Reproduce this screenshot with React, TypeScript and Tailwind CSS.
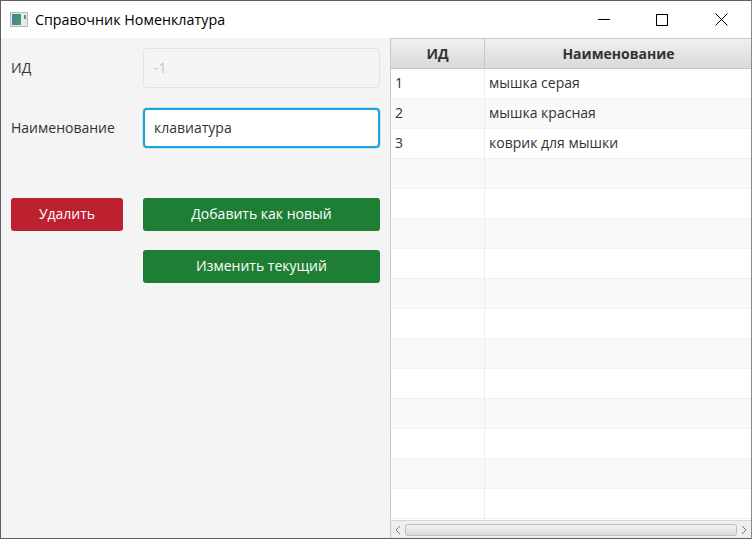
import React from 'react';

const rows = [
  { id: '1', name: 'мышка серая' },
  { id: '2', name: 'мышка красная' },
  { id: '3', name: 'коврик для мышки' },
  ...Array.from({ length: 12 }, () => ({ id: '', name: '' })),
];

const font = { fontFamily: '"Open Sans", "Noto Sans", sans-serif' };

const AppIcon = () => (
  <svg width="18" height="15" viewBox="0 0 18 15" className="shrink-0">
    <defs>
      <linearGradient id="ico" x1="0" y1="0" x2="1" y2="1">
        <stop offset="0" stopColor="#3f7fa0" />
        <stop offset="1" stopColor="#4f9a68" />
      </linearGradient>
    </defs>
    <rect x="0.5" y="0.5" width="17" height="14" fill="#e8eaea" stroke="#b4b8b8" />
    <rect x="2" y="2" width="9" height="11" fill="url(#ico)" />
    <rect x="14" y="3" width="2" height="4" fill="#4f9a8a" />
  </svg>
);

export default function App() {
  return (
    <div
      className="w-[752px] h-[539px] flex flex-col overflow-hidden bg-white border-t border-l border-r border-b border-[#5f5f5f] border-r-[#8a8a8a] text-[#333333] text-[14px]"
      style={font}
    >
      {/* Title bar */}
      <div className="h-[37px] shrink-0 flex items-center bg-white text-[#000000]">
        <div className="ml-[9px] mr-[7px] flex items-center">
          <AppIcon />
        </div>
        <span className="text-[14.3px] flex-1">Справочник Номенклатура</span>
        <div className="flex items-center">
          <button className="w-[59px] h-[37px] flex items-center justify-center">
            <span className="block w-[12px] h-px bg-black" />
          </button>
          <button className="w-[59px] h-[37px] flex items-center justify-center pr-[2px]">
            <span className="block w-[12px] h-[12px] border border-black" />
          </button>
          <button className="w-[59px] h-[37px] flex items-center justify-center">
            <svg width="13" height="13" viewBox="0 0 13 13">
              <path d="M0.5 0.5 L12.5 12.5 M12.5 0.5 L0.5 12.5" stroke="#000" strokeWidth="1" fill="none" />
            </svg>
          </button>
        </div>
      </div>

      <div className="flex-1 flex min-h-0 bg-[#f4f4f4]">
        {/* Form */}
        <div className="w-[389px] shrink-0 pl-[10px] pr-[10px] pt-[10px]">
          <div className="flex items-center h-[40px]">
            <label className="w-[132px] text-[#333333] pb-[2px]">ИД</label>
            <input
              disabled
              value="-1"
              readOnly
              className="w-[237px] h-[40px] px-[10px] pb-[2px] rounded-[4px] border border-[#e3e3e3] bg-[#f5f5f5] text-[#c4c4c4] text-[14px] outline-none"
            />
          </div>
          <div className="flex items-center h-[40px] mt-[20px]">
            <label className="w-[132px] text-[#333333] pb-[2px]">Наименование</label>
            <input
              value="клавиатура"
              readOnly
              className="w-[237px] h-[40px] px-[9px] pb-[2px] rounded-[4px] border-2 border-[#1aa3da] shadow-[0_0_0_1px_#c4e6f4] bg-white text-[#333333] text-[14px] outline-none"
            />
          </div>
          <div className="flex mt-[50px]">
            <button className="w-[112px] h-[33px] pb-[2px] mr-[20px] rounded-[3px] bg-[#bd2130] text-white text-[14px]">Удалить</button>
            <button className="w-[237px] h-[33px] pb-[2px] rounded-[3px] bg-[#1e7e34] text-white text-[14px]">Добавить как новый</button>
          </div>
          <div className="flex justify-end mt-[19px]">
            <button className="w-[237px] h-[33px] pb-[2px] rounded-[3px] bg-[#1e7e34] text-white text-[14px]">Изменить текущий</button>
          </div>
        </div>

        {/* Table */}
        <div className="flex-1 min-w-0 flex flex-col border-l border-[#c8c8c8] bg-white">
          <div className="h-[31px] shrink-0 flex font-bold text-[#333333] bg-gradient-to-b from-[#f0f0f0] to-[#d9d9d9] border-t border-b border-[#c8c8c8]">
            <div className="w-[94px] shrink-0 flex items-center justify-center border-r border-[#c8c8c8]">ИД</div>
            <div className="flex-1 flex items-center justify-center pl-[1px]">Наименование</div>
          </div>
          <div className="flex-1 min-h-0 overflow-hidden">
            {rows.map((row, i) => (
              <div
                key={i}
                className={`h-[30px] flex items-center border-b border-[#f0f0f0] ${i % 2 === 1 ? 'bg-[#f9f9f9]' : 'bg-white'}`}
              >
                <div className="w-[94px] h-full shrink-0 flex items-center pl-[4px] pb-[2px] border-r border-[#ececec]">{row.id}</div>
                <div className="flex-1 pl-[4px] pb-[2px]">{row.name}</div>
              </div>
            ))}
          </div>
          {/* Scrollbar */}
          <div className="h-[18px] shrink-0 flex items-center bg-[#efefef] border-t border-[#d6d6d6]">
            <svg width="14" height="16" viewBox="0 0 14 16" className="shrink-0">
              <path d="M9 4 L5 8 L9 12" stroke="#777" strokeWidth="1" fill="none" />
            </svg>
            <div className="flex-1 h-[12px] rounded-[3px] border border-[#bdbdbd] bg-gradient-to-b from-[#f2f2f2] to-[#dcdcdc]" />
            <svg width="14" height="16" viewBox="0 0 14 16" className="shrink-0">
              <path d="M5 4 L9 8 L5 12" stroke="#777" strokeWidth="1" fill="none" />
            </svg>
          </div>
        </div>
      </div>
    </div>
  );
}
